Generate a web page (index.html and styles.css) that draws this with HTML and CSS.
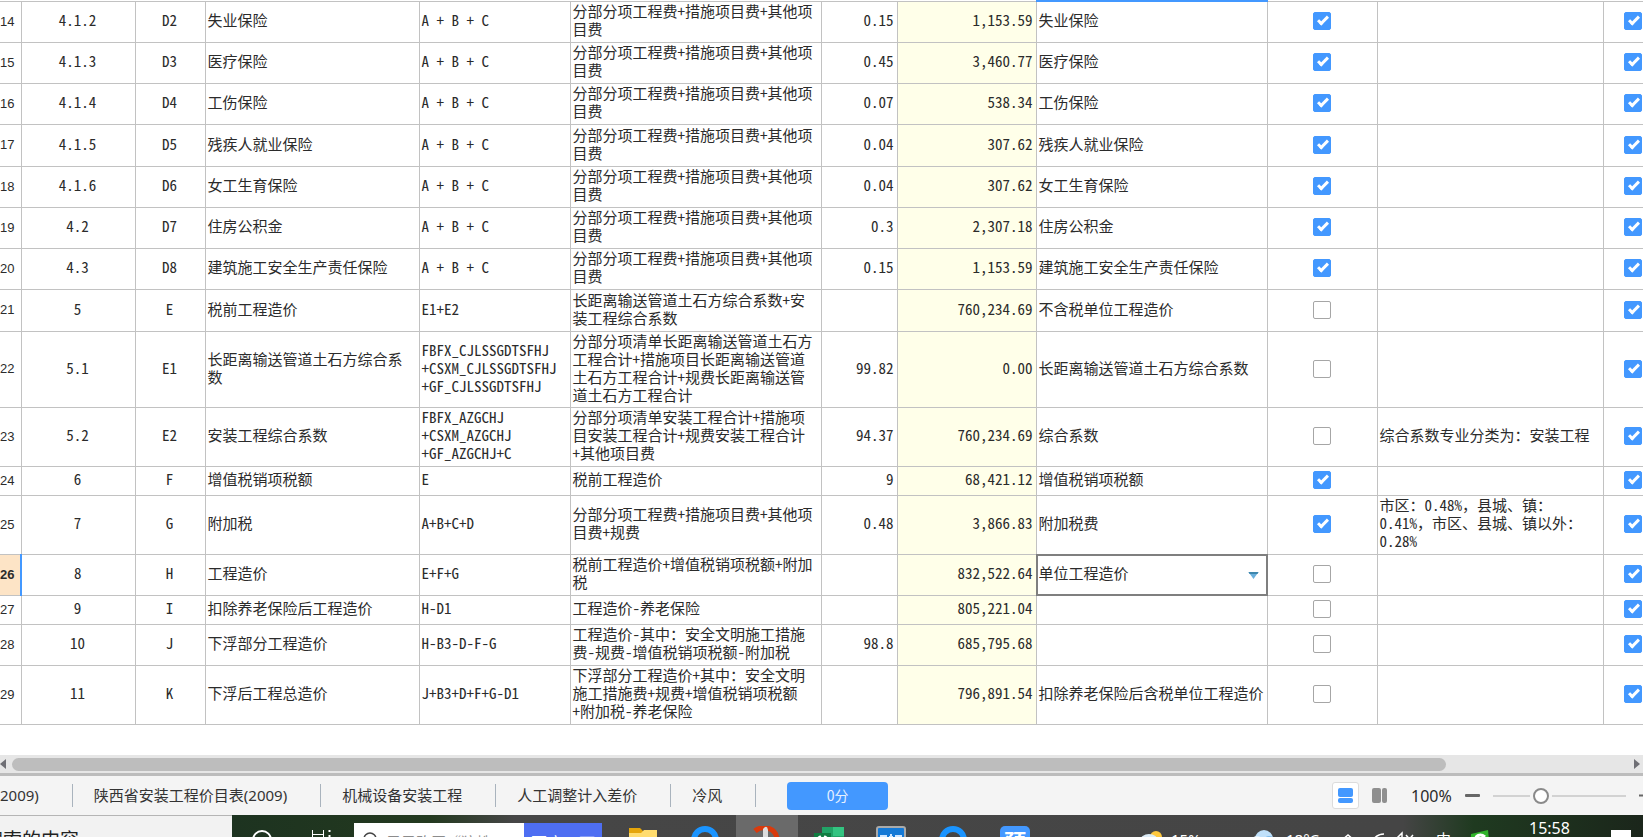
FILE: index.html
```html
<!DOCTYPE html>
<html lang="zh-CN">
<head>
<meta charset="utf-8">
<title>费用汇总</title>
<link rel="stylesheet" href="styles.css">
</head>
<body>
<main class="app">
<section class="sheet">
<table class="grid">
<colgroup><col class="c-no"><col class="c-seq"><col class="c-code"><col class="c-name"><col class="c-base"><col class="c-desc"><col class="c-rate"><col class="c-sum"><col class="c-type"><col class="c-check"><col class="c-note"><col class="c-out"></colgroup>
<tbody>
<tr class="l2"><th>14</th><td class="mid">4.1.2</td><td class="mid">D2</td><td>失业保险</td><td>A + B + C</td><td>分部分项工程费+措施项目费+其他项<br>目费</td><td class="num">0.15</td><td class="num sum">1,153.59</td><td class="edge">失业保险</td><td class="mid"><input type="checkbox" aria-label="失业保险" checked></td><td></td><td class="mid"><input type="checkbox" aria-label="输出" checked></td></tr>
<tr class="l2"><th>15</th><td class="mid">4.1.3</td><td class="mid">D3</td><td>医疗保险</td><td>A + B + C</td><td>分部分项工程费+措施项目费+其他项<br>目费</td><td class="num">0.45</td><td class="num sum">3,460.77</td><td>医疗保险</td><td class="mid"><input type="checkbox" aria-label="医疗保险" checked></td><td></td><td class="mid"><input type="checkbox" aria-label="输出" checked></td></tr>
<tr class="l2"><th>16</th><td class="mid">4.1.4</td><td class="mid">D4</td><td>工伤保险</td><td>A + B + C</td><td>分部分项工程费+措施项目费+其他项<br>目费</td><td class="num">0.07</td><td class="num sum">538.34</td><td>工伤保险</td><td class="mid"><input type="checkbox" aria-label="工伤保险" checked></td><td></td><td class="mid"><input type="checkbox" aria-label="输出" checked></td></tr>
<tr class="l2"><th>17</th><td class="mid">4.1.5</td><td class="mid">D5</td><td>残疾人就业保险</td><td>A + B + C</td><td>分部分项工程费+措施项目费+其他项<br>目费</td><td class="num">0.04</td><td class="num sum">307.62</td><td>残疾人就业保险</td><td class="mid"><input type="checkbox" aria-label="残疾人就业保险" checked></td><td></td><td class="mid"><input type="checkbox" aria-label="输出" checked></td></tr>
<tr class="l2"><th>18</th><td class="mid">4.1.6</td><td class="mid">D6</td><td>女工生育保险</td><td>A + B + C</td><td>分部分项工程费+措施项目费+其他项<br>目费</td><td class="num">0.04</td><td class="num sum">307.62</td><td>女工生育保险</td><td class="mid"><input type="checkbox" aria-label="女工生育保险" checked></td><td></td><td class="mid"><input type="checkbox" aria-label="输出" checked></td></tr>
<tr class="l2"><th>19</th><td class="mid">4.2</td><td class="mid">D7</td><td>住房公积金</td><td>A + B + C</td><td>分部分项工程费+措施项目费+其他项<br>目费</td><td class="num">0.3</td><td class="num sum">2,307.18</td><td>住房公积金</td><td class="mid"><input type="checkbox" aria-label="住房公积金" checked></td><td></td><td class="mid"><input type="checkbox" aria-label="输出" checked></td></tr>
<tr class="l2"><th>20</th><td class="mid">4.3</td><td class="mid">D8</td><td>建筑施工安全生产责任保险</td><td>A + B + C</td><td>分部分项工程费+措施项目费+其他项<br>目费</td><td class="num">0.15</td><td class="num sum">1,153.59</td><td>建筑施工安全生产责任保险</td><td class="mid"><input type="checkbox" aria-label="建筑施工安全生产责任保险" checked></td><td></td><td class="mid"><input type="checkbox" aria-label="输出" checked></td></tr>
<tr class="l2"><th>21</th><td class="mid">5</td><td class="mid">E</td><td>税前工程造价</td><td>E1+E2</td><td>长距离输送管道土石方综合系数+安<br>装工程综合系数</td><td class="num"></td><td class="num sum">760,234.69</td><td>不含税单位工程造价</td><td class="mid"><input type="checkbox" aria-label="不含税单位工程造价"></td><td></td><td class="mid"><input type="checkbox" aria-label="输出" checked></td></tr>
<tr class="l4"><th>22</th><td class="mid">5.1</td><td class="mid">E1</td><td>长距离输送管道土石方综合系<br>数</td><td>FBFX_CJLSSGDTSFHJ<br>+CSXM_CJLSSGDTSFHJ<br>+GF_CJLSSGDTSFHJ</td><td>分部分项清单长距离输送管道土石方<br>工程合计+措施项目长距离输送管道<br>土石方工程合计+规费长距离输送管<br>道土石方工程合计</td><td class="num">99.82</td><td class="num sum">0.00</td><td>长距离输送管道土石方综合系数</td><td class="mid"><input type="checkbox" aria-label="长距离输送管道土石方综合系数"></td><td></td><td class="mid"><input type="checkbox" aria-label="输出" checked></td></tr>
<tr class="l3"><th>23</th><td class="mid">5.2</td><td class="mid">E2</td><td>安装工程综合系数</td><td>FBFX_AZGCHJ<br>+CSXM_AZGCHJ<br>+GF_AZGCHJ+C</td><td>分部分项清单安装工程合计+措施项<br>目安装工程合计+规费安装工程合计<br>+其他项目费</td><td class="num">94.37</td><td class="num sum">760,234.69</td><td>综合系数</td><td class="mid"><input type="checkbox" aria-label="综合系数"></td><td>综合系数专业分类为：安装工程</td><td class="mid"><input type="checkbox" aria-label="输出" checked></td></tr>
<tr class="l1"><th>24</th><td class="mid">6</td><td class="mid">F</td><td>增值税销项税额</td><td>E</td><td>税前工程造价</td><td class="num">9</td><td class="num sum">68,421.12</td><td>增值税销项税额</td><td class="mid"><input type="checkbox" aria-label="增值税销项税额" checked></td><td></td><td class="mid"><input type="checkbox" aria-label="输出" checked></td></tr>
<tr class="l3"><th>25</th><td class="mid">7</td><td class="mid">G</td><td>附加税</td><td>A+B+C+D</td><td>分部分项工程费+措施项目费+其他项<br>目费+规费</td><td class="num">0.48</td><td class="num sum">3,866.83</td><td>附加税费</td><td class="mid"><input type="checkbox" aria-label="附加税费" checked></td><td>市区：0.48%，县城、镇：<br>0.41%，市区、县城、镇以外：<br>0.28%</td><td class="mid"><input type="checkbox" aria-label="输出" checked></td></tr>
<tr class="l2"><th class="current">26</th><td class="mid">8</td><td class="mid">H</td><td>工程造价</td><td>E+F+G</td><td>税前工程造价+增值税销项税额+附加<br>税</td><td class="num"></td><td class="num sum">832,522.64</td><td class="editing"><select class="picker" aria-label="费用类别"><option>单位工程造价</option></select><svg class="arrow" viewBox="0 0 10 7" aria-hidden="true"><path d="M0 0H10L5 7Z" fill="#6bb0dc"/><path d="M0 0H10L9 2H1Z" fill="#3e87ae"/></svg></td><td class="mid"><input type="checkbox" aria-label="单位工程造价"></td><td></td><td class="mid"><input type="checkbox" aria-label="输出" checked></td></tr>
<tr class="l1"><th>27</th><td class="mid">9</td><td class="mid">I</td><td>扣除养老保险后工程造价</td><td>H-D1</td><td>工程造价-养老保险</td><td class="num"></td><td class="num sum">805,221.04</td><td></td><td class="mid"><input type="checkbox" aria-label="扣除养老保险后工程造价"></td><td></td><td class="mid"><input type="checkbox" aria-label="输出" checked></td></tr>
<tr class="l2"><th>28</th><td class="mid">10</td><td class="mid">J</td><td>下浮部分工程造价</td><td>H-B3-D-F-G</td><td>工程造价-其中：安全文明施工措施<br>费-规费-增值税销项税额-附加税</td><td class="num">98.8</td><td class="num sum">685,795.68</td><td></td><td class="mid"><input type="checkbox" aria-label="下浮部分工程造价"></td><td></td><td class="mid"><input type="checkbox" aria-label="输出" checked></td></tr>
<tr class="l3"><th>29</th><td class="mid">11</td><td class="mid">K</td><td>下浮后工程总造价</td><td>J+B3+D+F+G-D1</td><td>下浮部分工程造价+其中：安全文明<br>施工措施费+规费+增值税销项税额<br>+附加税-养老保险</td><td class="num"></td><td class="num sum">796,891.54</td><td>扣除养老保险后含税单位工程造价</td><td class="mid"><input type="checkbox" aria-label="扣除养老保险后含税单位工程造价"></td><td></td><td class="mid"><input type="checkbox" aria-label="输出" checked></td></tr>
</tbody>
</table>
</section>
<div class="hscroll">
<button class="step" aria-label="向左滚动"><svg width="6" height="10" viewBox="0 0 6 10"><path d="M6 0V10L0 5Z" fill="#6f6f75"/></svg></button>
<div class="track"><div class="thumb" style="width: 88.6%"></div></div>
<button class="step" aria-label="向右滚动"><svg width="6" height="10" viewBox="0 0 6 10"><path d="M0 0V10L6 5Z" fill="#6f6f75"/></svg></button>
</div>
<footer class="status">
<nav class="tabs">
<a class="tab first" href="#">2009)</a><a class="tab" href="#">陕西省安装工程价目表(2009)</a><a class="tab" href="#">机械设备安装工程</a><a class="tab" href="#">人工调整计入差价</a><a class="tab" href="#">冷风</a>
</nav>
<button class="score">0分</button>
<div class="tools">
<button class="view on" aria-label="上下布局"><svg width="15" height="15" viewBox="0 0 15 15" fill="#4398ff"><rect width="15" height="9" rx="2"/><rect y="10" width="15" height="5" rx="2"/></svg></button>
<button class="view" aria-label="左右布局"><svg width="15" height="15" viewBox="0 0 15 15" fill="#8f8f8f"><rect width="9" height="15" rx="2"/><rect x="10" width="5" height="15" rx="2"/></svg></button>
<span class="percent">100%</span>
<button class="zoom" aria-label="缩小"><svg width="15" height="3"><rect width="15" height="3" rx="1" fill="#666"/></svg></button>
<input class="slider" type="range" min="0" max="100" value="34" aria-label="缩放">
<button class="zoom" aria-label="放大"><svg width="15" height="15" viewBox="0 0 15 15"><path d="M0 7.5H15M7.5 0V15" stroke="#666" stroke-width="2"/></svg></button>
</div>
</footer>
<div class="taskbar">
<div class="hint">搜索的内容</div>
<div class="shell">
<div class="start">
<svg width="24" height="24" viewBox="0 0 24 24"><circle cx="12" cy="13" r="9" fill="none" stroke="#fff" stroke-width="2"/></svg>
<svg width="22" height="24" viewBox="0 0 22 24" fill="none" stroke="#fff"><path d="M1.500 3V20M12.500 3V20M1 7.500H13M1 17.500H13" stroke-width="1"/><path d="M18.500 3V5M18.500 8V20" stroke-width="2"/></svg>
</div>
<form class="search"><svg width="16" height="20" viewBox="0 0 16 20"><circle cx="8" cy="8" r="6" fill="none" stroke="#444" stroke-width="1.500"/></svg><input type="text" aria-label="搜索" placeholder="男子购买“狼蛛"><button type="button">百度一下</button></form>
<div class="apps">
<div class="app-icon"><svg width="28" height="28" viewBox="0 0 28 28"><path d="M0 0H11L14 3H28V28H0Z" fill="#e5a50a"/><path d="M0 5H12L15 2H28V28H0Z" fill="#ffdc6e"/></svg></div>
<div class="app-icon"><svg width="32" height="32" viewBox="0 0 32 32"><circle cx="16" cy="14" r="11" fill="none" stroke="#1a94ff" stroke-width="6"/></svg></div>
<div class="app-icon active"><svg width="28" height="30" viewBox="0 0 28 30"><path d="M2 5C10-2 25 2 24 16" fill="none" stroke="#d93a0c" stroke-width="5"/><path d="M10 14V3Q14-2 15 4V14Z" fill="#ddd"/></svg></div>
<div class="app-icon"><svg width="30" height="30" viewBox="0 0 30 30"><rect x="8" y="1" width="22" height="29" fill="#21a366"/><rect x="19" y="1" width="11" height="9" fill="#33c481"/><rect y="7" width="17" height="18" fill="#107c41"/><path d="M5 10L12 21M12 10L5 21" stroke="#fff" stroke-width="3"/></svg></div>
<div class="app-icon"><svg width="30" height="30" viewBox="0 0 30 30"><rect x="1" y="1" width="28" height="28" rx="2" fill="#1479d6" stroke="#aaa" stroke-width="2"/><path d="M5 15V10H10V15M13 11H17M15 8V15M20 15V10H25V15" fill="none" stroke="#cfe6ff" stroke-width="2"/></svg></div>
<div class="app-icon"><svg width="32" height="32" viewBox="0 0 32 32"><circle cx="16" cy="14" r="11" fill="none" stroke="#1a94ff" stroke-width="6"/></svg></div>
<div class="app-icon"><span class="badge">预</span></div>
</div>
<div class="tray">
<svg class="sun" width="24" height="24" viewBox="0 0 24 24"><circle cx="16" cy="7" r="6" fill="#ffc83d"/><ellipse cx="9" cy="11" rx="9" ry="7" fill="#dcecf7"/></svg>
<span class="t1">15%</span>
<svg class="cloud" width="24" height="24" viewBox="0 0 24 24"><circle cx="13" cy="9" r="9" fill="#bfe0fa"/><circle cx="6" cy="12" r="6" fill="#e3f2fd"/><circle cx="18" cy="12" r="6" fill="#7db9ea"/></svg>
<span class="t2">18°C</span>
<svg class="sys" width="78" height="24" viewBox="0 0 78 24" fill="none" stroke="#fff" stroke-width="1.500"><path d="M2 10L8 5L14 10"/><path d="M31 17A13 13 0 0 1 44 4M36 17A8 8 0 0 1 44 9"/><path d="M54 8H57L62 3V19M66 5L73 13M73 5L66 13"/></svg>
<span class="ime">中</span>
<svg class="green" width="20" height="20" viewBox="0 0 20 20"><path d="M1 4L18 0L20 20H0Z" fill="#2fb42a"/><path d="M15 7C10 3 5 6 6 10C8 14 14 13 14 17" fill="none" stroke="#fff" stroke-width="3"/></svg>
<time class="clock">15:58</time>
<svg class="note" width="20" height="20" viewBox="0 0 20 20"><path d="M0 0H20V16H12L8 20V16H0Z" fill="#fff"/></svg>
</div>
</div>
</div>
</main>
</body>
</html>
```
FILE: styles.css
```css
* { box-sizing: border-box; }
body { margin: 0; overflow: hidden; background: #fff; color: #2b2b2b; font-family: "Noto Sans CJK SC", sans-serif; font-size: 15px; }
button, input, select { font: inherit; margin: 0; }
button { border: 0; padding: 0; background: none; }
.app { display: flex; flex-direction: column; height: 100vh; }
.sheet { flex: 1; min-height: 0; overflow: hidden; }

/* cost table */
.grid { width: calc(100% + 20px); table-layout: fixed; border-collapse: collapse; font-family: "Noto Sans Mono CJK SC", "Noto Sans CJK SC", monospace; line-height: 18px; }
.c-no { width: 21px; }
.c-seq { width: 114px; }
.c-code { width: 70px; }
.c-name { width: 214px; }
.c-base { width: 151px; }
.c-desc { width: 251px; }
.c-rate { width: 76px; }
.c-sum { width: 139px; }
.c-type { width: 231px; }
.c-check { width: 110px; }
.c-out { width: 59px; }
.grid td, .grid th { border: 1px solid #c2c2c2; padding: 0 3px 3px 2px; white-space: nowrap; text-align: left; vertical-align: middle; }
.grid th { padding: 0; border-left: 0; font-family: "Liberation Sans", sans-serif; font-size: 13px; font-weight: 400; }
.grid .mid { text-align: center; }
.grid .num { text-align: right; }
.grid .sum { background: #ffffe9; }
.grid .edge { border-top: 2px solid #4398ff; }
.l1 { height: 29px; }
.l2 { height: 41px; }
.l2:nth-child(4n) { height: 42px; }
.l3 { height: 59px; }
.l4 { height: 75px; }
.grid .current { background: #fde4c6; border-right: 2px solid #4398ff; font-weight: 700; }
.grid .editing { position: relative; padding: 0; }
.picker { position: absolute; inset: -1px; width: calc(100% + 2px); height: calc(100% + 2px); appearance: none; border: 2px solid #7f7f7f; border-radius: 0; background: #fff; color: inherit; padding: 0 20px 3px 1px; }
.arrow { position: absolute; right: 8px; top: 17px; width: 11px; height: 7px; }
input[type="checkbox"] { appearance: none; display: block; width: 18px; height: 18px; margin: 2px auto 0; border: 1px solid #a6a6a6; border-radius: 2px; background: #fff; }
input[type="checkbox"]:checked { border-color: #4398ff; background: #4398ff; }
input[type="checkbox"]:checked::after { content: ""; display: block; width: 3px; height: 8px; margin: 1px 0 0 6px; border: solid #fff; border-width: 0 3px 3px 0; transform: rotate(45deg); }

/* scrollbar */
.hscroll { display: flex; align-items: center; height: 21px; background: #e6e6e6; border-bottom: 3px solid #bcbcbc; }
.hscroll .step { display: flex; width: 12px; }
.hscroll .step:last-child { padding-left: 3px; }
.track { flex: 1; }
.thumb { height: 13px; border-radius: 7px; background: #bdbdbd; }

/* sheet tabs and zoom */
.status { display: flex; align-items: center; height: 39px; background: #f4f4f4; overflow: hidden; }
.tabs { display: flex; }
.tab { padding: 0 33px 0 21px; border-right: 1px solid #a9b3bd; color: #333; text-decoration: none; line-height: 23px; white-space: nowrap; font-family: "Noto Sans", "Noto Sans CJK SC", sans-serif; }
.tab.first { padding-left: 0; }
.score { width: 101px; height: 28px; margin-left: 31px; border-radius: 4px; background: #4398ff; color: #e6f0ff; font-size: 14px; line-height: 26px; padding-bottom: 2px; }
.tools { display: flex; align-items: center; margin-left: auto; margin-right: -11px; }
.view { display: flex; align-items: center; justify-content: center; width: 27px; height: 27px; margin-right: 7px; border: 1px solid transparent; border-radius: 3px; }
.view.on { background: #fff; border-color: #dcdcdc; }
.percent { width: 54px; margin-left: 11px; font-family: "Noto Sans", sans-serif; font-size: 16px; }
.zoom { display: flex; }
.slider { appearance: none; width: 133px; height: 20px; margin: 0 13px; background: none; }
.slider::-webkit-slider-runnable-track { height: 2px; background: #d2d2d2; }
.slider::-webkit-slider-thumb { appearance: none; width: 16px; height: 16px; margin-top: -7px; border: 2px solid #8a8a8a; border-radius: 50%; background: #fff; box-shadow: 0 0 0 3px #f4f4f4; }

/* taskbar */
.taskbar { display: flex; height: 22px; overflow: hidden; align-items: flex-start; }
.hint { display: flex; justify-content: flex-end; width: 232px; height: 42px; padding: 12px 153px 0 0; border-top: 1px solid #b5b5b5; background: #f2f2f2; white-space: nowrap; font-size: 19px; line-height: 22px; color: #222; }
.shell { flex: 1; display: flex; height: 42px; background: linear-gradient(90deg, #1d3320, #23391f 14%, #464646 20%, #454545 83%, #1f3a20 88%, #1b261b); }
.start { display: flex; gap: 37px; width: 122px; padding: 12px 0 0 18px; }
.search { display: flex; width: 248px; height: 42px; margin-top: 8px; background: #fff; }
.search svg { margin: 8px 8px 0; }
.search input { width: 0; flex: 1; height: 36px; padding: 0; border: 0; outline: 0; background: none; }
.search input::placeholder { color: #8c8c8c; }
.search button { width: 78px; height: 37px; background: #4e6ef2; color: #fff; font-size: 16px; }
.apps { display: flex; }
.app-icon { display: flex; justify-content: center; width: 62px; padding-top: 11px; }
.app-icon:first-child { width: 72px; padding-left: 10px; padding-top: 13px; }
.app-icon.active { background: #6a6a6a; }
.badge { width: 30px; height: 30px; border-radius: 5px; background: #4398ff; color: #fff; font-size: 22px; line-height: 28px; font-weight: 700; text-align: center; }
.tray { display: flex; margin-left: auto; padding-top: 15px; color: #fff; line-height: 18px; font-family: "Noto Sans", "Noto Sans CJK SC", sans-serif; }
.t1 { width: 80px; margin-left: 7px; }
.t2 { width: 54px; margin-left: 11px; }
.sun, .cloud, .green, .sys { flex: none; }
.sys { margin-right: 18px; }
.ime { width: 34px; }
.clock { width: 82px; margin: -11px 0 0 39px; font-size: 16px; }
.note { flex: none; margin-right: 12px; }
```
